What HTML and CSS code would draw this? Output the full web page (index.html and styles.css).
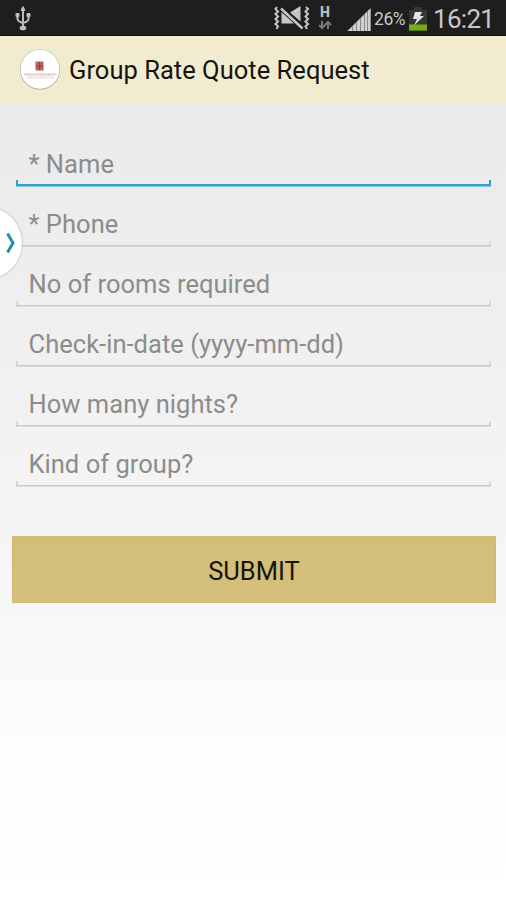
FILE: index.html
```html
<!DOCTYPE html>
<html lang="en">
<head>
<meta charset="utf-8">
<title>Group Rate Quote Request</title>
<link rel="stylesheet" href="styles.css">
</head>
<body>
<div class="screen">
  <div class="status">
    <svg class="usb" width="20" height="28" viewBox="0 0 20 28" fill="none" stroke="#bdbdbd" stroke-width="2">
      <path d="M10 4v20M4.500 10v5q0 2.500 5.500 4q5.500-1.500 5.500-4v-5"/>
      <path d="M8 6.500 10 2.500l2 4zM3 9.500h3v3H3zM14 9.500h3v3h-3z" fill="#bdbdbd" stroke-width="1"/>
      <ellipse cx="10" cy="24" rx="3.300" ry="2.300" fill="#bdbdbd" stroke="none"/>
    </svg>
    <svg class="mute" width="36" height="26" viewBox="0 0 36 26" fill="none" stroke="#c6c6c6" stroke-width="2">
      <path d="M3 2l-1.500 2L4 6.500 1.500 9 4 11.500 1.500 14 4 16.500 1.500 19 4 21.500 2.500 24M32 2l2 2-2.500 2.500L34 9l-2.500 2.500L34 14l-2.500 2.500L34 19l-2.500 2.500L33 24"/>
      <path d="M7.500 7v11.500H20zM16 7.500 26.500 1v15.500z" fill="#c6c6c6" stroke="none"/>
      <path d="M8 2 28.500 20.500" stroke="#1e1e1e" stroke-width="2"/>
      <path d="M7 3.500 28.500 23.500" stroke-width="2.400"/>
    </svg>
    <div class="data">
      <span class="net">H</span>
      <svg width="14" height="10" viewBox="0 0 14 10" fill="none" stroke="#777" stroke-width="2"><path d="M4 1v7M1 5l3 3 3-3M10 9V2M7 5l3-3 3 3"/></svg>
    </div>
    <svg class="signal" width="24" height="23" viewBox="0 0 24 23">
      <path d="M0 23 23.500 0v23z" fill="#8a8a8a"/>
      <path d="M1 23l4-4v4zM6 18l3-3v8H6zM10 14l3-3v12h-3zM14 10l3-3v16h-3zM18 6l2-2v19h-2zM21 3l2.500-2.500V23H21z" fill="#d0d0d0"/>
    </svg>
    <span class="percent">26%</span>
    <svg class="battery" width="18" height="24" viewBox="0 0 18 24">
      <path d="M5 0h8v3h5v21H0V3h5z" fill="#363636"/>
      <path d="M0 17.500h18v6H0z" fill="#78ac14"/>
      <path d="M6 5h7l-2 4h4L5 18.500 8 12H4z" fill="#e4e4e4"/>
    </svg>
    <span class="clock">16:21</span>
  </div>
  <header class="bar">
    <svg class="logo" width="42" height="44" viewBox="0 0 42 44">
      <circle cx="21" cy="21.500" r="20.200" fill="#b9b5ac"/>
      <circle cx="21" cy="21.300" r="19.500" fill="#fff"/>
      <path d="M16.500 13.500h8v9h-8z" fill="#bd625d"/>
      <path d="M20.500 14v8M17 18h7" stroke="#943c39" stroke-width="1"/>
      <path d="M5.500 26.500h32" stroke="#e3bcbd" stroke-width="2" stroke-dasharray="2 .6"/>
      <path d="M8 29.500h27" stroke="#ecd4d5" stroke-width="2" stroke-dasharray="1.500 .7"/>
    </svg>
    <h1 class="title"><span>Group Rate Quote Request</span></h1>
  </header>
  <form class="form">
    <div class="field focused"><span class="name">* Name</span></div>
    <div class="field"><span class="phone">* Phone</span></div>
    <div class="field"><span class="rooms">No of rooms required</span></div>
    <div class="field"><span class="date">Check-in-date (yyyy-mm-dd)</span></div>
    <div class="field"><span class="nights">How many nights?</span></div>
    <div class="field"><span class="kind">Kind of group?</span></div>
    <button class="submit" type="button">SUBMIT</button>
  </form>
  <div class="handle">
    <svg width="10" height="22" viewBox="0 0 10 22" fill="none" stroke="#268fa5" stroke-width="3"><path d="M1.500 1.500 7 11l-5.500 9.500"/></svg>
  </div>
</div>
</body>
</html>
```
FILE: styles.css
```css
* { box-sizing: border-box; }
body { margin: 0; font-family: Roboto, sans-serif; }
.screen {
  position: relative;
  height: 900px;
  overflow: hidden;
  background: linear-gradient(#eaeaea 100px, #f0f0f0 350px, #f7f7f7 600px, #fefefe 780px, #fff);
}
.status {
  display: flex;
  align-items: flex-start;
  height: 36px;
  background: #1e1e1e;
  border-bottom: 1px solid #111;
}
.usb { margin: 4px 0 0 13px; }
.mute { margin: 5px 0 0 241px; }
.data {
  display: flex;
  flex-direction: column;
  align-items: center;
  width: 14px;
  margin: 6px 0 0 8px;
}
.net { color: #bbb; font-size: 14px; font-weight: 900; line-height: 12px; }
.data svg { margin-top: 2px; }
.signal { margin: 8px 0 0 15px; }
.percent { width: 33px; margin: 8px 0 0 3px; color: #c8c8c8; font-size: 17.500px; line-height: 22px; letter-spacing: -.4px; }
.battery { margin: 7px 0 0 2px; }
.clock { margin: 4px 0 0 6px; color: #c8c8c8; font-size: 26px; line-height: 30px; letter-spacing: -.7px; }
.bar {
  display: flex;
  align-items: center;
  height: 67px;
  padding: 0 0 0 19px;
  background: #f1ecd0;
}
.logo { margin-top: 1px; }
.title { margin: 1px 0 0 8px; color: #15140f; font-size: 25.500px; font-weight: 400; line-height: 32px; letter-spacing: .03px; white-space: nowrap; }
.form { padding: 24px 11px 0 12px; }
.field {
  display: flex;
  align-items: center;
  height: 60px;
  margin: 0 4px;
  padding: 13px 13px 0 12.500px;
  color: #8c8c8c;
  font-size: 25.500px;
  line-height: 32px;
  letter-spacing: .03px;
  white-space: nowrap;
  background:
    linear-gradient(#c9c9c9, #c9c9c9) 0 58px / 100% 1.500px no-repeat,
    linear-gradient(#d8d8d8, #d8d8d8) 0 54px / 2px 5px no-repeat,
    linear-gradient(#d8d8d8, #d8d8d8) 100% 54px / 2px 5px no-repeat;
}
.focused {
  background:
    linear-gradient(#2ea2c8, #2ea2c8) 0 57px / 100% 2.500px no-repeat,
    linear-gradient(#2ea2c8, #2ea2c8) 0 53px / 2px 5px no-repeat,
    linear-gradient(#2ea2c8, #2ea2c8) 100% 53px / 2px 5px no-repeat;
}
.submit {
  display: block;
  width: 484px;
  height: 67px;
  margin: 49px 0 0;
  padding: 2px 0 0;
  border: 1px solid #cfb974;
  background: #d3bf79;
  color: #17140b;
  font: 400 25.500px/32px Roboto, sans-serif;
}
.handle {
  position: absolute;
  top: 207px;
  left: -49px;
  display: flex;
  align-items: center;
  justify-content: flex-end;
  width: 71px;
  height: 72px;
  padding-right: 6px;
  border-radius: 50%;
  background: #fff;
  box-shadow: 0 0 2px #999;
}
```
